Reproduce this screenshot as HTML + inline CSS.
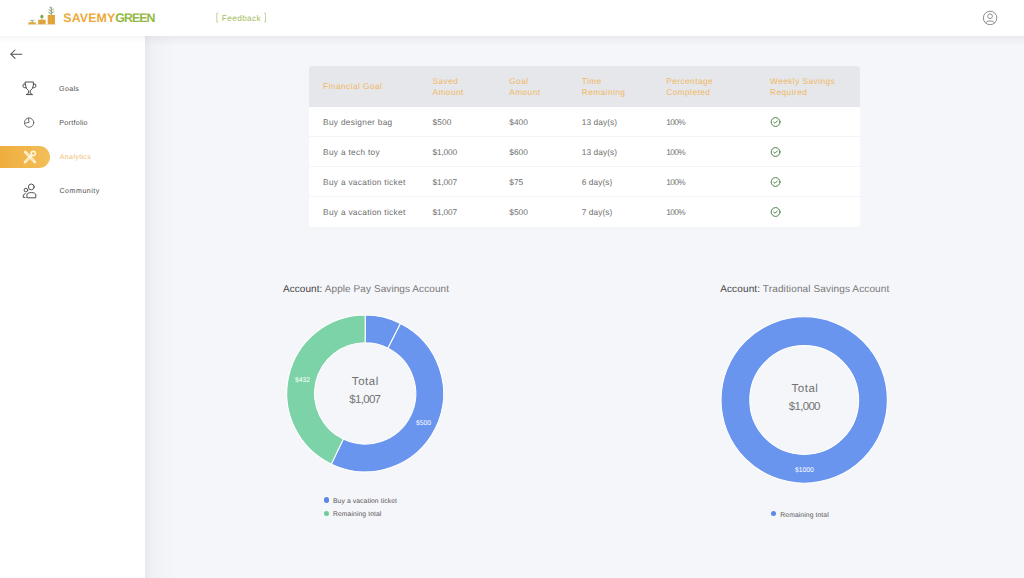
<!DOCTYPE html>
<html><head><meta charset="utf-8">
<style>
*{margin:0;padding:0;box-sizing:border-box}
html,body{width:1024px;height:578px;overflow:hidden;background:#f5f6fa;font-family:"Liberation Sans",sans-serif;position:relative}
.abs{position:absolute}
.t{position:absolute;white-space:nowrap;text-rendering:geometricPrecision}
</style></head>
<body>
<div class="abs" style="left:145px;top:36px;width:879px;height:542px;background:#f5f6fa"></div>
<div class="abs" style="left:145px;top:36px;width:879px;height:10px;background:linear-gradient(180deg,rgba(0,0,0,.045),rgba(0,0,0,0))"></div>
<div class="abs" style="left:145px;top:36px;width:32px;height:542px;background:linear-gradient(90deg,rgba(0,0,0,.055),rgba(0,0,0,.02) 25%,rgba(0,0,0,0))"></div>
<div class="abs" style="left:0;top:36px;width:145px;height:542px;background:#fff"></div>
<div class="abs" style="left:0;top:36px;width:145px;height:8px;background:linear-gradient(180deg,rgba(0,0,0,.03),rgba(0,0,0,0))"></div>
<div class="abs" style="left:0;top:0;width:1024px;height:36px;background:#fff"></div>
<svg class="abs" style="left:0;top:0" width="64" height="36" viewBox="0 0 64 36">
 <g fill="#e4a63e">
  <path d="M28.3 22.6 Q32 21.4 35.8 22.6 V24.2 H28.3Z"/>
  <rect x="38.1" y="19.7" width="7.6" height="4.5"/>
  <rect x="47.7" y="14.9" width="7.3" height="9.3"/>
 </g>
 <g fill="#c98a2a" opacity=".5"><rect x="40" y="19.7" width=".6" height="4.5"/><rect x="43" y="19.7" width=".6" height="4.5"/><rect x="49.5" y="14.9" width=".6" height="9.3"/><rect x="52.5" y="14.9" width=".6" height="9.3"/></g>
 <rect x="27.5" y="24" width="28" height=".5" fill="#caa060" opacity=".5"/>
 <path d="M32.2 22.4 V20.3 M32.2 20.8 Q31 19.8 30.3 20.4 M32.2 20.8 Q33.4 19.9 34.3 20.2" stroke="#6d8f3e" stroke-width=".7" fill="none"/>
 <path d="M41.9 19.7 V17.8" stroke="#6d9a3e" stroke-width=".7"/>
 <path d="M41.9 14.4 Q44.2 15.6 43.4 17.4 Q41.9 18.6 40.4 17.4 Q39.6 15.6 41.9 14.4Z" fill="#78a442"/>
 <g stroke="#82986c" stroke-width=".85" fill="none" stroke-linecap="round">
  <path d="M51.3 14.9 V7.2"/>
  <path d="M51.3 13.6 Q48.6 13.4 48.3 12"/><path d="M51.3 13 Q53.8 12.8 54 11.6"/>
  <path d="M51.3 11.2 Q49 10.8 48.9 9.4"/><path d="M51.3 10.8 Q53.4 10.2 53.4 9"/>
  <path d="M51.3 8.8 Q49.8 8.4 50 7"/>
 </g>
</svg>
<div class="t" style="left:63.30px;top:12.30px;font-size:12.4px;line-height:12.4px;color:#eaa83a;font-weight:700;letter-spacing:0px;"><span style="color:#eca93b;letter-spacing:0.1px">SAVEMY</span><span style="color:#93b942;letter-spacing:-1.0px">GREEN</span></div>
<div class="t" style="left:221.80px;top:15.26px;font-size:8.2px;line-height:8.2px;color:#a3bc5c;font-weight:400;letter-spacing:0.42px;">Feedback</div>
<svg class="abs" style="left:210px;top:8px" width="60" height="20" viewBox="210 8 60 20" fill="none" stroke="#b3c77a" stroke-width=".75"><path d="M218.2 13.2 H216.8 V22 H218.2"/><path d="M264.1 13.2 H265.5 V22 H264.1"/></svg>
<svg class="abs" style="left:976px;top:4px" width="28" height="28" viewBox="976 4 28 28" fill="none" stroke="#7a7a7a" stroke-width=".85">
 <circle cx="990.1" cy="17.95" r="6.75"/>
 <circle cx="990.05" cy="16.2" r="2.35"/>
 <path d="M985.6 22.6 Q990 19.2 994.6 22.6"/>
</svg>
<svg class="abs" style="left:0;top:36px" width="145" height="180" viewBox="0 36 145 180">
 <path d="M21.8 54.2 H10.8 M15 50 L10.8 54.2 L15 58.4" fill="none" stroke="#555" stroke-width="1.05" stroke-linecap="round" stroke-linejoin="round"/>
</svg>
<div class="abs" style="left:0;top:146px;width:50px;height:22.3px;border-radius:0 11.2px 11.2px 0;background:linear-gradient(90deg,#eeae3f,#f3be58)"></div>
<svg class="abs" style="left:0;top:36px" width="145" height="180" viewBox="0 36 145 180">
 <g fill="none" stroke="#484848" stroke-width="0.95" stroke-linejoin="round" stroke-linecap="round">
  <path d="M25.4 82 H33.4 V85 Q33.2 89 30.2 90.6 V93.2 L32.6 94.6 H26.2 L28.6 93.2 V90.6 Q25.6 89 25.4 85 Z"/>
  <path d="M25.4 84.2 H23.6 Q23 84.2 23 85 V86.2 Q23 87.4 24.2 87.6 L25.8 87.8"/>
  <path d="M33.4 84.2 H35.2 Q35.8 84.2 35.8 85 V86.2 Q35.8 87.4 34.6 87.6 L33 87.8"/>
  <circle cx="29.1" cy="122.6" r="4.65" stroke="#555" stroke-width=".85"/>
  <path d="M28.4 118.1 L29.1 122.3 L24.7 123.2" stroke="#555" stroke-width=".85"/>
  <circle cx="31.3" cy="186.9" r="2.9"/>
  <circle cx="25.9" cy="190.1" r="1.8"/>
  <path d="M26.9 197.4 V195 Q26.9 192.6 31.3 192.6 Q35.8 192.6 35.8 195 V197.4 Z"/>
  <path d="M25.2 193.6 Q23.2 194.4 23.2 196 V197.4 H25"/>
 </g>
 <g fill="none" stroke="#fff4d8" stroke-linecap="round" stroke-linejoin="round">
  <path d="M25.2 152 L34.8 162" stroke-width="2.6"/>
  <path d="M25 162.2 L31.8 155.2" stroke-width="2.6"/>
  <circle cx="33.2" cy="153.6" r="2.2" stroke-width="1.6"/>
 </g>
 <g fill="none" stroke="#f3c067" stroke-width=".7" stroke-linecap="round" opacity=".8">
  <path d="M26.2 153 L29 155.9"/><path d="M31.2 158.2 L33.6 160.8"/>
  <path d="M26.2 161 L28.6 158.6"/>
 </g>
</svg>
<div class="t" style="left:59.10px;top:86.09px;font-size:7.1px;line-height:7.1px;color:#505050;font-weight:400;letter-spacing:0.3px;">Goals</div>
<div class="t" style="left:59.30px;top:120.09px;font-size:7.1px;line-height:7.1px;color:#505050;font-weight:400;letter-spacing:0.28px;">Portfolio</div>
<div class="t" style="left:59.80px;top:154.09px;font-size:7.1px;line-height:7.1px;color:#f0bd72;font-weight:400;letter-spacing:0.32px;">Analytics</div>
<div class="t" style="left:59.50px;top:188.09px;font-size:7.1px;line-height:7.1px;color:#505050;font-weight:400;letter-spacing:0.5px;">Community</div>
<div class="abs" style="left:309px;top:66px;width:551px;height:161px;background:#fff;border-radius:3px;overflow:hidden"><div class="abs" style="left:0;top:0;width:551px;height:40.8px;background:#e6e7eb"></div></div>
<div class="abs" style="left:309px;top:136.4px;width:551px;height:1px;background:#f4f4f6"></div>
<div class="abs" style="left:309px;top:166.3px;width:551px;height:1px;background:#f4f4f6"></div>
<div class="abs" style="left:309px;top:196.2px;width:551px;height:1px;background:#f4f4f6"></div>
<div class="t" style="left:323.00px;top:81.67px;font-size:8.3px;line-height:8.3px;color:#f0b863;font-weight:400;letter-spacing:0.45px;">Financial Goal</div>
<div class="t" style="left:432.50px;top:76.77px;font-size:8.3px;line-height:8.3px;color:#f0b863;font-weight:400;letter-spacing:0.45px;">Saved</div>
<div class="t" style="left:432.50px;top:88.17px;font-size:8.3px;line-height:8.3px;color:#f0b863;font-weight:400;letter-spacing:0.45px;">Amount</div>
<div class="t" style="left:509.20px;top:76.77px;font-size:8.3px;line-height:8.3px;color:#f0b863;font-weight:400;letter-spacing:0.45px;">Goal</div>
<div class="t" style="left:509.20px;top:88.17px;font-size:8.3px;line-height:8.3px;color:#f0b863;font-weight:400;letter-spacing:0.45px;">Amount</div>
<div class="t" style="left:581.70px;top:76.77px;font-size:8.3px;line-height:8.3px;color:#f0b863;font-weight:400;letter-spacing:0.45px;">Time</div>
<div class="t" style="left:581.70px;top:88.17px;font-size:8.3px;line-height:8.3px;color:#f0b863;font-weight:400;letter-spacing:0.45px;">Remaining</div>
<div class="t" style="left:666.20px;top:76.77px;font-size:8.3px;line-height:8.3px;color:#f0b863;font-weight:400;letter-spacing:0.45px;">Percentage</div>
<div class="t" style="left:666.20px;top:88.17px;font-size:8.3px;line-height:8.3px;color:#f0b863;font-weight:400;letter-spacing:0.45px;">Completed</div>
<div class="t" style="left:770.00px;top:76.77px;font-size:8.3px;line-height:8.3px;color:#f0b863;font-weight:400;letter-spacing:0.45px;">Weekly Savings</div>
<div class="t" style="left:770.00px;top:88.17px;font-size:8.3px;line-height:8.3px;color:#f0b863;font-weight:400;letter-spacing:0.45px;">Required</div>
<div class="t" style="left:323.10px;top:118.27px;font-size:8.3px;line-height:8.3px;color:#6e6e6e;font-weight:400;letter-spacing:0.3px;">Buy designer bag</div>
<div class="t" style="left:432.50px;top:118.27px;font-size:8.3px;line-height:8.3px;color:#6e6e6e;font-weight:400;letter-spacing:0.1px;">$500</div>
<div class="t" style="left:509.20px;top:118.27px;font-size:8.3px;line-height:8.3px;color:#6e6e6e;font-weight:400;letter-spacing:0.1px;">$400</div>
<div class="t" style="left:581.70px;top:118.27px;font-size:8.3px;line-height:8.3px;color:#6e6e6e;font-weight:400;letter-spacing:0.1px;">13 day(s)</div>
<div class="t" style="left:666.20px;top:118.27px;font-size:8.3px;line-height:8.3px;color:#6e6e6e;font-weight:400;letter-spacing:-0.6px;">100%</div>
<svg class="abs" style="left:768px;top:114px" width="16" height="16" viewBox="768 114 16 16" fill="none" stroke="#3e7b3c" stroke-width=".95" stroke-linecap="round" stroke-linejoin="round"><circle cx="775.6" cy="122" r="4.4"/><path d="M773.7 122.1 L775 123.3 L777.4 120.9"/></svg>
<div class="t" style="left:323.10px;top:148.27px;font-size:8.3px;line-height:8.3px;color:#6e6e6e;font-weight:400;letter-spacing:0.3px;">Buy a tech toy</div>
<div class="t" style="left:432.50px;top:148.27px;font-size:8.3px;line-height:8.3px;color:#6e6e6e;font-weight:400;letter-spacing:-0.15px;">$1,000</div>
<div class="t" style="left:509.20px;top:148.27px;font-size:8.3px;line-height:8.3px;color:#6e6e6e;font-weight:400;letter-spacing:0.1px;">$600</div>
<div class="t" style="left:581.70px;top:148.27px;font-size:8.3px;line-height:8.3px;color:#6e6e6e;font-weight:400;letter-spacing:0.1px;">13 day(s)</div>
<div class="t" style="left:666.20px;top:148.27px;font-size:8.3px;line-height:8.3px;color:#6e6e6e;font-weight:400;letter-spacing:-0.6px;">100%</div>
<svg class="abs" style="left:768px;top:144px" width="16" height="16" viewBox="768 144 16 16" fill="none" stroke="#3e7b3c" stroke-width=".95" stroke-linecap="round" stroke-linejoin="round"><circle cx="775.6" cy="152" r="4.4"/><path d="M773.7 152.1 L775 153.3 L777.4 150.9"/></svg>
<div class="t" style="left:323.10px;top:178.27px;font-size:8.3px;line-height:8.3px;color:#6e6e6e;font-weight:400;letter-spacing:0.3px;">Buy a vacation ticket</div>
<div class="t" style="left:432.50px;top:178.27px;font-size:8.3px;line-height:8.3px;color:#6e6e6e;font-weight:400;letter-spacing:-0.15px;">$1,007</div>
<div class="t" style="left:509.20px;top:178.27px;font-size:8.3px;line-height:8.3px;color:#6e6e6e;font-weight:400;letter-spacing:0.1px;">$75</div>
<div class="t" style="left:581.70px;top:178.27px;font-size:8.3px;line-height:8.3px;color:#6e6e6e;font-weight:400;letter-spacing:0.1px;">6 day(s)</div>
<div class="t" style="left:666.20px;top:178.27px;font-size:8.3px;line-height:8.3px;color:#6e6e6e;font-weight:400;letter-spacing:-0.6px;">100%</div>
<svg class="abs" style="left:768px;top:174px" width="16" height="16" viewBox="768 174 16 16" fill="none" stroke="#3e7b3c" stroke-width=".95" stroke-linecap="round" stroke-linejoin="round"><circle cx="775.6" cy="182" r="4.4"/><path d="M773.7 182.1 L775 183.3 L777.4 180.9"/></svg>
<div class="t" style="left:323.10px;top:208.27px;font-size:8.3px;line-height:8.3px;color:#6e6e6e;font-weight:400;letter-spacing:0.3px;">Buy a vacation ticket</div>
<div class="t" style="left:432.50px;top:208.27px;font-size:8.3px;line-height:8.3px;color:#6e6e6e;font-weight:400;letter-spacing:-0.15px;">$1,007</div>
<div class="t" style="left:509.20px;top:208.27px;font-size:8.3px;line-height:8.3px;color:#6e6e6e;font-weight:400;letter-spacing:0.1px;">$500</div>
<div class="t" style="left:581.70px;top:208.27px;font-size:8.3px;line-height:8.3px;color:#6e6e6e;font-weight:400;letter-spacing:0.1px;">7 day(s)</div>
<div class="t" style="left:666.20px;top:208.27px;font-size:8.3px;line-height:8.3px;color:#6e6e6e;font-weight:400;letter-spacing:-0.6px;">100%</div>
<svg class="abs" style="left:768px;top:204px" width="16" height="16" viewBox="768 204 16 16" fill="none" stroke="#3e7b3c" stroke-width=".95" stroke-linecap="round" stroke-linejoin="round"><circle cx="775.6" cy="212" r="4.4"/><path d="M773.7 212.1 L775 213.3 L777.4 210.9"/></svg>
<svg class="abs" style="left:0;top:0" width="1024" height="578" viewBox="0 0 1024 578"><path d="M365.15 315.00A78.4 78.4 0 0 1 400.51 323.43L387.97 348.24A50.6 50.6 0 0 0 365.15 342.80Z" fill="#6995ef" stroke="#fff" stroke-width="1.1" stroke-linejoin="round"/><path d="M400.51 323.43A78.4 78.4 0 0 1 331.32 464.13L343.32 439.05A50.6 50.6 0 0 0 387.97 348.24Z" fill="#6995ef" stroke="#fff" stroke-width="1.1" stroke-linejoin="round"/><path d="M331.32 464.13A78.4 78.4 0 0 1 365.15 315.00L365.15 342.80A50.6 50.6 0 0 0 343.32 439.05Z" fill="#7cd3a7" stroke="#fff" stroke-width="1.1" stroke-linejoin="round"/><circle cx="804.2" cy="400.0" r="68.8" fill="none" stroke="#6995ef" stroke-width="28.800000000000004"/><circle cx="804.2" cy="400.0" r="83.2" fill="none" stroke="#fff" stroke-width="1.1"/><circle cx="804.2" cy="400.0" r="54.4" fill="none" stroke="#fff" stroke-width="1.1"/></svg>
<div class="t" style="left:282.90px;top:284.94px;font-size:10px;line-height:10px;color:#777;font-weight:400;letter-spacing:0.08px;"><span style="color:#444">Account:</span> Apple Pay Savings Account</div>
<div class="t" style="left:720.20px;top:284.94px;font-size:10px;line-height:10px;color:#777;font-weight:400;letter-spacing:0.13px;"><span style="color:#444">Account:</span> Traditional Savings Account</div>
<div class="t" style="left:265.10px;width:200px;text-align:center;top:376.67px;font-size:11.5px;line-height:11.5px;color:#737373;font-weight:400;letter-spacing:0.55px;text-indent:0.55px">Total</div>
<div class="t" style="left:265.20px;width:200px;text-align:center;top:395.37px;font-size:11.5px;line-height:11.5px;color:#737373;font-weight:400;letter-spacing:-0.7px;text-indent:-0.7px">$1,007</div>
<div class="t" style="left:704.70px;width:200px;text-align:center;top:383.57px;font-size:11.5px;line-height:11.5px;color:#737373;font-weight:400;letter-spacing:0.55px;text-indent:0.55px">Total</div>
<div class="t" style="left:704.70px;width:200px;text-align:center;top:402.17px;font-size:11.5px;line-height:11.5px;color:#737373;font-weight:400;letter-spacing:-0.7px;text-indent:-0.7px">$1,000</div>
<div class="abs" style="left:323.55px;top:497.05px;width:5.5px;height:5.5px;border-radius:50%;background:#5f87e8"></div>
<div class="t" style="left:333.00px;top:498.64px;font-size:6.8px;line-height:6.8px;color:#555;font-weight:400;letter-spacing:0.08px;">Buy a vacation ticket</div>
<div class="abs" style="left:323.55px;top:510.65px;width:5.5px;height:5.5px;border-radius:50%;background:#6fcc99"></div>
<div class="t" style="left:333.00px;top:512.24px;font-size:6.8px;line-height:6.8px;color:#555;font-weight:400;letter-spacing:0.08px;">Remaining total</div>
<div class="abs" style="left:770.55px;top:510.95000000000005px;width:5.5px;height:5.5px;border-radius:50%;background:#5f87e8"></div>
<div class="t" style="left:780.30px;top:512.54px;font-size:6.8px;line-height:6.8px;color:#555;font-weight:400;letter-spacing:0.08px;">Remaining total</div>
<div class="t" style="left:295.00px;top:377.84px;font-size:6.8px;line-height:6.8px;color:#fff;font-weight:400;letter-spacing:0px;">$432</div>
<div class="t" style="left:416.00px;top:420.94px;font-size:6.8px;line-height:6.8px;color:#fff;font-weight:400;letter-spacing:0px;">$500</div>
<div class="t" style="left:794.90px;top:467.54px;font-size:6.8px;line-height:6.8px;color:#fff;font-weight:400;letter-spacing:0px;">$1000</div>
</body></html>
